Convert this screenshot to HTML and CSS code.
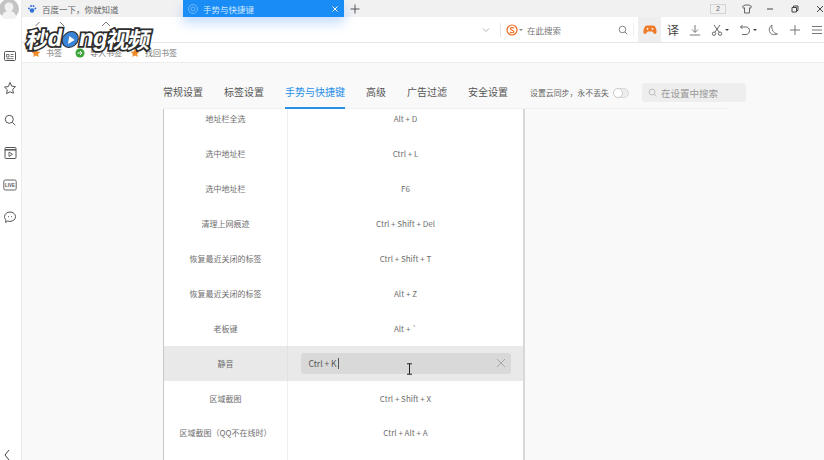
FILE: index.html
```html
<!DOCTYPE html>
<html lang="zh-CN">

<head>
  <meta charset="UTF-8">
  <title>手势与快捷键</title>
  <link rel="stylesheet" href="styles.css">
</head>

<body>

  <!-- Left sidebar -->
  <aside class="sidebar">
    <div class="avatar">
      <svg viewBox="0 0 20 20" width="20" height="20"><circle cx="10" cy="10" r="10" fill="#c4c4c4"/><circle cx="10" cy="8" r="4.500" fill="#f2f2f2"/><path d="M2.500 18c1.500-4.500 4-6 7.500-6s6 1.500 7.500 6a10 10 0 0 1-15 0z" fill="#f2f2f2"/></svg>
    </div>
    <div class="side-icons">
      <svg viewBox="0 0 14 14" width="14" height="14"><rect x="1.500" y="2.500" width="11" height="9" rx="1" fill="none" stroke="#555"/><path d="M3.500 5.500h2.500v2.500h-2.500zM7.500 5.500h3M7.500 7.500h3M3.500 9.700h7" fill="none" stroke="#555" stroke-width=".8"/></svg>
      <svg viewBox="0 0 14 14" width="14" height="14"><path d="M7 1.500l1.700 3.600 3.800.5-2.800 2.700.7 3.900L7 10.800l-3.400 1.900.7-3.900-2.800-2.700 3.800-.5z" fill="none" stroke="#555"/></svg>
      <svg viewBox="0 0 14 14" width="14" height="14"><circle cx="6.300" cy="6.300" r="4" fill="none" stroke="#555"/><path d="M9.300 9.300l3 3" stroke="#555"/></svg>
      <svg viewBox="0 0 14 14" width="14" height="14"><rect x="2" y="1.500" width="11" height="11" rx="1" fill="none" stroke="#555"/><path d="M2 3.800h11" stroke="#555" stroke-width="1.500"/><path d="M6 6v4.500l3.500-2.200z" fill="none" stroke="#555" stroke-width=".9"/></svg>
      <svg viewBox="0 0 14 14" width="14" height="14"><rect x=".8" y="2" width="12.400" height="10" rx="1.500" fill="none" stroke="#666"/><text x="7" y="9" class="live-text" text-anchor="middle">LIVE</text></svg>
      <svg viewBox="0 0 14 14" width="14" height="14"><path d="M7 2c3 0 5.500 2 5.500 4.700S10 11.400 7 11.400c-.8 0-1.500-.1-2.200-.4L2.600 12.500l.4-2.500C2 9 1.500 7.900 1.500 6.700 1.500 4 4 2 7 2z" fill="none" stroke="#555"/><path d="M5 6.700h1M8 6.700h1" stroke="#555"/></svg>
    </div>
    <svg class="side-collapse" viewBox="0 0 8 12" width="8" height="12"><path d="M6 1L2 6l4 5" fill="none" stroke="#444"/></svg>
  </aside>

  <div class="main">

    <!-- Tabs and window controls -->
    <div class="tabbar">
      <div class="tab">
        <svg viewBox="0 0 10 10" width="10" height="10"><circle cx="5" cy="6.500" r="2.200" fill="#2f6fd8"/><circle cx="2" cy="4.500" r="1" fill="#2f6fd8"/><circle cx="4" cy="2" r="1" fill="#2f6fd8"/><circle cx="6.500" cy="2" r="1" fill="#2f6fd8"/><circle cx="8.300" cy="4.500" r="1" fill="#2f6fd8"/></svg>
        <span>百度一下，你就知道</span>
      </div>
      <div class="tab tab-active">
        <svg viewBox="0 0 10 10" width="10" height="10"><circle cx="5" cy="5" r="4.500" fill="none" stroke="#8cc8ff" stroke-width=".7"/><circle cx="5" cy="5" r="2" fill="none" stroke="#8cc8ff" stroke-width=".7"/></svg>
        <span>手势与快捷键</span>
        <svg class="tab-close" viewBox="0 0 8 8" width="8" height="8"><path d="M1.500 1.500l5 5M6.500 1.500l-5 5" stroke="#fff"/></svg>
      </div>
      <svg class="tab-add" viewBox="0 0 10 10" width="10" height="10"><path d="M5 .5v9M.5 5h9" stroke="#555"/></svg>
      <div class="win-controls">
        <span class="tab-count">2</span>
        <svg class="win-shirt" viewBox="0 0 10 10" width="10" height="10"><path d="M3 1h4l2.500 1.500-1 1.800-1-.5V9h-5V3.800l-1 .5-1-1.800z" fill="none" stroke="#444" stroke-width=".8"/></svg>
        <svg class="win-min" viewBox="0 0 8 8" width="8" height="8"><path d="M1 4h6" stroke="#444"/></svg>
        <svg class="win-max" viewBox="0 0 8 8" width="8" height="8"><path d="M1 2.500h4.500V7H1zM2.500 2.500V1H7v4.500H5.500" fill="none" stroke="#444"/></svg>
        <svg class="win-close" viewBox="0 0 8 8" width="8" height="8"><path d="M1 1l6 6M7 1L1 7" stroke="#444"/></svg>
      </div>
    </div>

    <!-- Address bar and tools -->
    <div class="toolbar">
      <div class="nav-icons">
        <svg viewBox="0 0 10 10" width="10" height="10"><path d="M6.500 1L2.500 5" fill="none" stroke="#777"/></svg>
        <svg viewBox="0 0 10 10" width="10" height="10"><path d="M3 1l4 4" fill="none" stroke="#777"/></svg>
        <svg class="nav-home" viewBox="0 0 10 10" width="10" height="10"><path d="M1 5l4-4 4 4" fill="none" stroke="#777"/></svg>
      </div>
      <svg class="addr-arrow" viewBox="0 0 8 8" width="8" height="8"><path d="M1 2.500l3 3 3-3" fill="none" stroke="#999" stroke-width=".8"/></svg>
      <div class="searchbox">
        <svg viewBox="0 0 12 12" width="12" height="12"><circle cx="6" cy="6" r="5" fill="none" stroke="#ee6a1f" stroke-width="1.200"/><path d="M8 4.200C7.200 3.400 4.300 3.300 4.300 4.800S8 6 8 7.500 5 9 4 8" fill="none" stroke="#ee6a1f" stroke-width="1.100"/></svg>
        <i class="caret"></i>
        <span class="search-text">在此搜索</span>
        <svg class="search-go" viewBox="0 0 10 10" width="10" height="10"><circle cx="4.500" cy="4.500" r="3.300" fill="none" stroke="#666" stroke-width=".8"/><path d="M7 7l2.200 2.200" stroke="#666" stroke-width=".8"/></svg>
      </div>
      <div class="game-tile">
        <svg viewBox="0 0 14 12" width="14" height="12"><path d="M4 1.500h6c2 0 3 2 3.500 5 .3 2-.3 3.500-1.500 3.500-1 0-1.700-1.500-2.700-2.500H4.700C3.700 8.500 3 10 2 10 .8 10 .2 8.500.5 6.500 1 3.500 2 1.500 4 1.500z" fill="#ef7a2a"/><circle cx="4.500" cy="4.800" r=".9" fill="#fff"/><circle cx="9.500" cy="4.800" r=".9" fill="#fff"/></svg>
      </div>
      <div class="tools">
        <span class="tool-translate">译</span>
        <svg viewBox="0 0 12 12" width="12" height="12"><path d="M6 1v7M3 5.500L6 8.500l3-3M.8 11h10.400" fill="none" stroke="#555" stroke-width=".8"/></svg>
        <span class="tool-drop">
          <svg viewBox="0 0 12 12" width="12" height="12"><path d="M3 1l5 7M9 1L4 8" fill="none" stroke="#444" stroke-width=".8"/><circle cx="3" cy="9.700" r="1.700" fill="none" stroke="#444" stroke-width=".8"/><circle cx="9" cy="9.700" r="1.700" fill="none" stroke="#444" stroke-width=".8"/></svg>
          <i class="caret caret-dark"></i>
        </span>
        <span class="tool-drop">
          <svg viewBox="0 0 12 12" width="12" height="12"><path d="M3.500 1L1.500 3l2 2M1.500 3H7c2 0 3.500 1.500 3.500 3.500S9 10.500 7 10.500H3" fill="none" stroke="#444" stroke-width=".8"/></svg>
          <i class="caret caret-dark"></i>
        </span>
        <svg viewBox="0 0 12 12" width="12" height="12"><path d="M5 1C2.500 2.500 1.800 5 2.500 7.500S6 11.500 10.500 10C7 9.500 4 6 5 1z" fill="none" stroke="#555" stroke-width=".8"/></svg>
        <svg viewBox="0 0 12 12" width="12" height="12"><path d="M6 1v10M1 6h10" stroke="#555" stroke-width=".8"/></svg>
        <svg viewBox="0 0 12 12" width="12" height="12"><path d="M1 2.500h10M1 6h10M1 9.500h10" stroke="#555" stroke-width=".8"/></svg>
      </div>
    </div>

    <!-- Bookmarks -->
    <div class="bookmarks">
      <span class="bookmark">
        <svg viewBox="0 0 10 10" width="10" height="10"><path d="M5 .5l1.300 3 3.200.3-2.400 2.100.7 3.100L5 7.400 2.200 9l.7-3.100L.5 3.800l3.200-.3z" fill="#f08a24"/></svg>
        书签
      </span>
      <span class="bookmark">
        <svg viewBox="0 0 10 10" width="10" height="10"><circle cx="5" cy="5" r="4.500" fill="#3aa63a"/><path d="M2.500 5h4M5 3l2 2-2 2" fill="none" stroke="#fff"/></svg>
        导入书签
      </span>
      <span class="bookmark bookmark-found">
        <svg viewBox="0 0 10 10" width="10" height="10"><path d="M5 .5l1.300 3 3.200.3-2.400 2.100.7 3.100L5 7.400 2.200 9l.7-3.100L.5 3.800l3.200-.3z" fill="#f08a24"/></svg>
        找回书签
      </span>
    </div>

    <!-- Settings page -->
    <div class="settings">
      <nav class="settings-nav">
        <a href="#">常规设置</a>
        <a href="#">标签设置</a>
        <a href="#" class="active">手势与快捷键</a>
        <a href="#">高级</a>
        <a href="#">广告过滤</a>
        <a href="#">安全设置</a>
        <span class="sync">设置云同步，永不丢失</span>
        <i class="toggle"></i>
        <div class="settings-search">
          <svg viewBox="0 0 10 10" width="9" height="9"><circle cx="4.500" cy="4.500" r="3.300" fill="none" stroke="#aaa" stroke-width=".8"/><path d="M7 7l2.200 2.200" stroke="#aaa" stroke-width=".8"/></svg>
          <span>在设置中搜索</span>
        </div>
      </nav>

      <div class="shortcut-panel">
        <div class="shortcut-list">
          <div class="row"><div class="name">地址栏全选</div><div class="keys">Alt + D</div></div>
          <div class="row"><div class="name">选中地址栏</div><div class="keys">Ctrl + L</div></div>
          <div class="row"><div class="name">选中地址栏</div><div class="keys">F6</div></div>
          <div class="row"><div class="name">清理上网痕迹</div><div class="keys">Ctrl + Shift + Del</div></div>
          <div class="row"><div class="name">恢复最近关闭的标签</div><div class="keys">Ctrl + Shift + T</div></div>
          <div class="row"><div class="name">恢复最近关闭的标签</div><div class="keys">Alt + Z</div></div>
          <div class="row"><div class="name">老板键</div><div class="keys">Alt + `</div></div>
          <div class="row row-editing">
            <div class="name">静音</div>
            <div class="keys">
              <div class="key-input">
                <span class="key-value">Ctrl + K</span>
                <svg viewBox="0 0 10 10" width="10" height="10"><path d="M1 1l8 8M9 1l-8 8" stroke="#999" stroke-width=".8"/></svg>
              </div>
            </div>
          </div>
          <div class="row"><div class="name">区域截图</div><div class="keys">Ctrl + Shift + X</div></div>
          <div class="row"><div class="name">区域截图（QQ不在线时）</div><div class="keys">Ctrl + Alt + A</div></div>
          <div class="row"><div class="name"></div><div class="keys"></div></div>
        </div>
      </div>
    </div>
  </div>

  <!-- Things lying over the page -->
  <div class="watermark">
    <span class="wm-cjk">秒</span><span class="wm-latin">d</span><span class="wm-play"><i></i></span><span class="wm-latin">ng</span><span class="wm-cjk">视频</span>
  </div>
  <svg class="ibeam" viewBox="0 0 7 12" width="7" height="12"><path d="M1 .8h5M1 11.200h5M3.500 .8v10.400" fill="none" stroke="#222" stroke-width="1"/></svg>

</body>

</html>
```

FILE: styles.css
```css
/* Global Styles */
html,
body {
  height: 100%;
}

body {
  margin: 0;
  display: flex;
  overflow: hidden;
  background-color: #fff;
  color: #555;
  font-family: "Noto Sans CJK SC", "Noto Sans", sans-serif;
}

svg {
  display: block;
  flex: none;
}

/* Sidebar */
.sidebar {
  position: relative;
  width: 21px;
  flex: none;
  border-right: 1px solid #ececec;
  background-color: #fff;
}

.avatar {
  height: 20px;
  overflow: hidden;
}

.avatar svg {
  margin: -1px 0 0 -1px;
}

.side-icons {
  display: flex;
  flex-direction: column;
  align-items: center;
  gap: 18.200px;
  margin-top: 29px;
  padding-right: 1px;
}

.live-text {
  font-size: 4.500px;
  font-weight: 700;
  fill: #555;
  font-family: "Liberation Sans", sans-serif;
}

.side-collapse {
  position: absolute;
  left: 3px;
  bottom: -1px;
}

.main {
  flex: 1;
  min-width: 0;
  display: flex;
  flex-direction: column;
}

/* Tabs */
.tabbar {
  height: 17px;
  flex: none;
  display: flex;
  align-items: center;
  background-color: #f1f1f2;
  font-size: 8.500px;
}

.tab {
  width: 161px;
  height: 17px;
  box-sizing: border-box;
  display: flex;
  align-items: center;
  gap: 5px;
  padding-left: 5px;
  color: #666;
}

.tab-active {
  position: relative;
  z-index: 1;
  background-color: #1a8cf6;
  color: #cfe8ff;
  box-shadow: 0 6px 12px rgba(40, 130, 250, 0.28);
}

.tab-close {
  margin-left: auto;
  margin-right: 5px;
}

.tab-add {
  margin-left: 6px;
}

.win-controls {
  margin-left: auto;
  display: flex;
  align-items: center;
}

.tab-count {
  width: 16px;
  height: 10px;
  box-sizing: border-box;
  border: 1px solid #d4d4d4;
  font-size: 7px;
  line-height: 8px;
  text-align: center;
  color: #666;
  font-family: "Liberation Sans", sans-serif;
}

.win-shirt {
  margin-left: 16px;
}

.win-min {
  margin-left: 14px;
}

.win-max {
  margin-left: 17px;
}

.win-close {
  margin-left: 17px;
}

/* Toolbar */
.toolbar {
  position: relative;
  height: 25px;
  flex: none;
  display: flex;
  align-items: center;
  border-bottom: 1px solid #e6e6e6;
  background-color: #fff;
}

.nav-icons {
  width: 90px;
  display: flex;
  gap: 14px;
  margin: 0 0 8px 11px;
}

.nav-home {
  margin-left: 20px;
}

.addr-arrow {
  margin-left: 359px;
}

.searchbox {
  width: 134px;
  height: 14px;
  box-sizing: border-box;
  display: flex;
  align-items: center;
  margin-left: 10px;
  padding: 0 5px;
  border-left: 1px solid #e6e6e6;
  border-right: 1px solid #eee;
  font-size: 8.500px;
  color: #777;
}

.caret {
  width: 0;
  height: 0;
  margin-left: 1px;
  border-top: 2px solid #888;
  border-left: 2px solid transparent;
  border-right: 2px solid transparent;
}

.caret-dark {
  margin-left: 2px;
  border-top-color: #444;
}

.search-text {
  margin-left: 4px;
}

.search-go {
  margin-left: auto;
}

.game-tile {
  width: 23px;
  height: 25px;
  display: flex;
  align-items: center;
  justify-content: center;
  margin-left: 4px;
  background-color: #eeeeee;
}

.tools {
  flex: 1;
  display: flex;
  align-items: center;
  gap: 10px;
  padding-left: 6px;
}

.tool-translate {
  font-size: 12px;
  line-height: 1;
  color: #444;
}

.tool-drop {
  display: flex;
  align-items: center;
}

/* Bookmarks */
.bookmarks {
  height: 20px;
  flex: none;
  box-sizing: border-box;
  display: flex;
  align-items: center;
  gap: 13px;
  padding-left: 9px;
  border-bottom: 1px solid #ededed;
  background-color: #fff;
  font-size: 8px;
  color: #777;
}

.bookmark {
  display: flex;
  align-items: center;
  gap: 5px;
}

.bookmark-found {
  margin-left: -5px;
}

/* Settings */
.settings {
  flex: 1;
  min-height: 0;
  display: flex;
  flex-direction: column;
  background-color: #f9f9f9;
}

.settings-nav {
  width: 565px;
  height: 46px;
  flex: none;
  box-sizing: border-box;
  display: flex;
  align-items: center;
  margin-left: 141px;
  padding-top: 14px;
  border-bottom: 1px solid #f0f0f0;
  font-size: 10px;
}

.settings-nav a {
  height: 32px;
  box-sizing: border-box;
  margin-right: 21px;
  border-bottom: 2px solid transparent;
  line-height: 30px;
  color: #555;
  text-decoration: none;
  white-space: nowrap;
}

.settings-nav a.active {
  color: #2a8fe8;
  border-bottom-color: #2a8fe8;
}

.sync {
  margin-left: 1px;
  font-size: 7.900px;
  color: #666;
  white-space: nowrap;
}

.toggle {
  position: relative;
  width: 16px;
  height: 10px;
  flex: none;
  box-sizing: border-box;
  margin-left: 4px;
  border: 1px solid #d8d8d8;
  border-radius: 5px;
  background-color: #eee;
}

.toggle::before {
  content: "";
  position: absolute;
  left: -1px;
  top: -1px;
  width: 10px;
  height: 10px;
  box-sizing: border-box;
  border: 1px solid #ccc;
  border-radius: 50%;
  background-color: #fff;
}

.settings-search {
  width: 104px;
  height: 19px;
  flex: none;
  box-sizing: border-box;
  display: flex;
  align-items: center;
  gap: 4px;
  margin-left: 13px;
  padding-left: 6px;
  border-radius: 3px;
  background-color: #eeeeee;
  font-size: 9.500px;
  color: #999;
  white-space: nowrap;
}

/* Shortcut table */
.shortcut-panel {
  flex: 1;
  min-height: 0;
  width: 362px;
  box-sizing: border-box;
  margin-left: 141px;
  overflow: hidden;
  border-left: 1px solid #c9c9c9;
  border-right: 2px solid #d8d8d8;
  background-color: #fff;
}

.shortcut-list {
  margin-top: -7.500px;
}

.row {
  height: 34.900px;
  display: flex;
  align-items: center;
  font-size: 8px;
  color: #6e6e6e;
}

.name {
  width: 123px;
  height: 100%;
  flex: none;
  display: flex;
  align-items: center;
  justify-content: center;
  border-right: 1px solid #eeeeee;
  white-space: nowrap;
}

.keys {
  flex: 1;
  height: 100%;
  display: flex;
  align-items: center;
  justify-content: center;
}

.row-editing {
  background-color: #e9e9e9;
}

.row-editing .name {
  border-right-color: #e2e2e2;
}

.key-input {
  width: 210px;
  height: 21px;
  box-sizing: border-box;
  display: flex;
  align-items: center;
  justify-content: space-between;
  padding: 0 5px 0 8px;
  border-radius: 3px;
  background-color: #d9d9d9;
  font-size: 8.500px;
  color: #555;
}

.key-value {
  padding-right: 1px;
  border-right: 1px solid #555;
  line-height: 11px;
}

/* Video watermark, over the toolbar */
.watermark {
  position: absolute;
  left: 27px;
  top: 23px;
  display: flex;
  align-items: center;
  height: 30px;
  transform: skewX(-10deg);
  color: #fff;
  font-weight: 700;
  font-family: "Noto Sans CJK SC", sans-serif;
  -webkit-text-stroke: 3.500px #2c2c2c;
  paint-order: stroke fill;
  line-height: 1;
}

.wm-cjk {
  font-size: 22.500px;
  letter-spacing: -1.500px;
}

.wm-latin {
  font-size: 24px;
  font-family: "Liberation Sans", sans-serif;
  letter-spacing: -.5px;
}

.wm-play {
  width: 15px;
  height: 15px;
  flex: none;
  display: flex;
  align-items: center;
  justify-content: center;
  margin-top: 3px;
  border: 1px solid #2c2c2c;
  border-radius: 50%;
  background-color: #3a84d8;
}

.wm-play i {
  width: 0;
  height: 0;
  margin-left: 2px;
  border-left: 6px solid #fff;
  border-top: 4px solid transparent;
  border-bottom: 4px solid transparent;
}

.ibeam {
  position: absolute;
  left: 406px;
  top: 363px;
}
```
